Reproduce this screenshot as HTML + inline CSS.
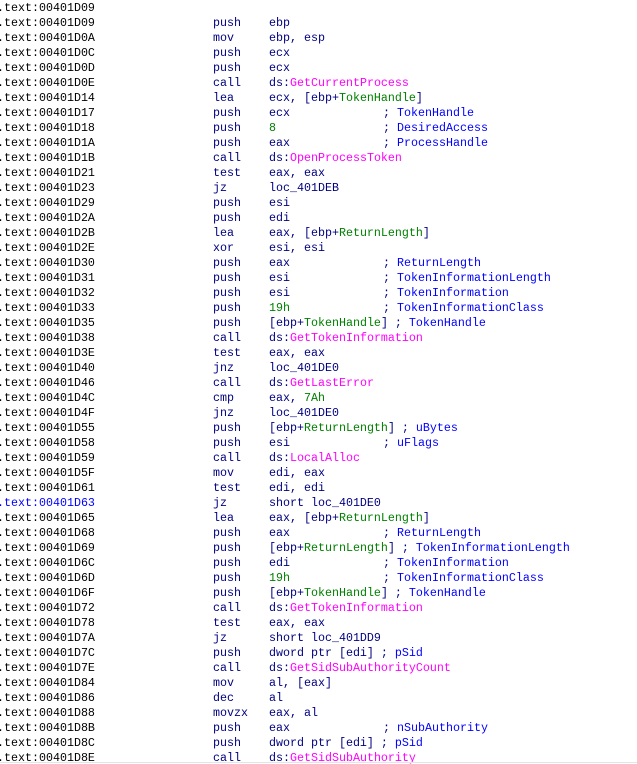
<!DOCTYPE html>
<html><head><meta charset="utf-8"><style>
html,body{margin:0;padding:0;background:#fff;width:637px;height:764px;overflow:hidden}
body{font-family:"Liberation Mono",monospace;font-size:11.67px;position:relative}
.l{position:absolute;left:0;height:15px;line-height:15px;white-space:pre;width:637px}
.a{position:absolute;left:-3px;color:#000}
.m{position:absolute;left:213px;color:#000080}
.o{position:absolute;left:269px;color:#000080}
.k{position:absolute;left:383px;color:#000080}
.f{color:#ff00ff}.g{color:#008000}.c{color:#0000ff}
.b{color:#0000ff}
.hr{position:absolute;left:0;top:762px;width:637px;height:1px;background:#e4e4e4}
</style></head><body>
<div class="l" style="top:1px"><span class="a">.text:00401D09</span></div>
<div class="l" style="top:16px"><span class="a">.text:00401D09</span><span class="m">push</span><span class="o">ebp</span></div>
<div class="l" style="top:31px"><span class="a">.text:00401D0A</span><span class="m">mov</span><span class="o">ebp, esp</span></div>
<div class="l" style="top:46px"><span class="a">.text:00401D0C</span><span class="m">push</span><span class="o">ecx</span></div>
<div class="l" style="top:61px"><span class="a">.text:00401D0D</span><span class="m">push</span><span class="o">ecx</span></div>
<div class="l" style="top:76px"><span class="a">.text:00401D0E</span><span class="m">call</span><span class="o">ds:<span class="f">GetCurrentProcess</span></span></div>
<div class="l" style="top:91px"><span class="a">.text:00401D14</span><span class="m">lea</span><span class="o">ecx, [ebp+<span class="g">TokenHandle</span>]</span></div>
<div class="l" style="top:106px"><span class="a">.text:00401D17</span><span class="m">push</span><span class="o">ecx</span><span class="k">; <span class="c">TokenHandle</span></span></div>
<div class="l" style="top:121px"><span class="a">.text:00401D18</span><span class="m">push</span><span class="o"><span class="g">8</span></span><span class="k">; <span class="c">DesiredAccess</span></span></div>
<div class="l" style="top:136px"><span class="a">.text:00401D1A</span><span class="m">push</span><span class="o">eax</span><span class="k">; <span class="c">ProcessHandle</span></span></div>
<div class="l" style="top:151px"><span class="a">.text:00401D1B</span><span class="m">call</span><span class="o">ds:<span class="f">OpenProcessToken</span></span></div>
<div class="l" style="top:166px"><span class="a">.text:00401D21</span><span class="m">test</span><span class="o">eax, eax</span></div>
<div class="l" style="top:181px"><span class="a">.text:00401D23</span><span class="m">jz</span><span class="o">loc_401DEB</span></div>
<div class="l" style="top:196px"><span class="a">.text:00401D29</span><span class="m">push</span><span class="o">esi</span></div>
<div class="l" style="top:211px"><span class="a">.text:00401D2A</span><span class="m">push</span><span class="o">edi</span></div>
<div class="l" style="top:226px"><span class="a">.text:00401D2B</span><span class="m">lea</span><span class="o">eax, [ebp+<span class="g">ReturnLength</span>]</span></div>
<div class="l" style="top:241px"><span class="a">.text:00401D2E</span><span class="m">xor</span><span class="o">esi, esi</span></div>
<div class="l" style="top:256px"><span class="a">.text:00401D30</span><span class="m">push</span><span class="o">eax</span><span class="k">; <span class="c">ReturnLength</span></span></div>
<div class="l" style="top:271px"><span class="a">.text:00401D31</span><span class="m">push</span><span class="o">esi</span><span class="k">; <span class="c">TokenInformationLength</span></span></div>
<div class="l" style="top:286px"><span class="a">.text:00401D32</span><span class="m">push</span><span class="o">esi</span><span class="k">; <span class="c">TokenInformation</span></span></div>
<div class="l" style="top:301px"><span class="a">.text:00401D33</span><span class="m">push</span><span class="o"><span class="g">19h</span></span><span class="k">; <span class="c">TokenInformationClass</span></span></div>
<div class="l" style="top:316px"><span class="a">.text:00401D35</span><span class="m">push</span><span class="o">[ebp+<span class="g">TokenHandle</span>] ; <span class="c">TokenHandle</span></span></div>
<div class="l" style="top:331px"><span class="a">.text:00401D38</span><span class="m">call</span><span class="o">ds:<span class="f">GetTokenInformation</span></span></div>
<div class="l" style="top:346px"><span class="a">.text:00401D3E</span><span class="m">test</span><span class="o">eax, eax</span></div>
<div class="l" style="top:361px"><span class="a">.text:00401D40</span><span class="m">jnz</span><span class="o">loc_401DE0</span></div>
<div class="l" style="top:376px"><span class="a">.text:00401D46</span><span class="m">call</span><span class="o">ds:<span class="f">GetLastError</span></span></div>
<div class="l" style="top:391px"><span class="a">.text:00401D4C</span><span class="m">cmp</span><span class="o">eax, <span class="g">7Ah</span></span></div>
<div class="l" style="top:406px"><span class="a">.text:00401D4F</span><span class="m">jnz</span><span class="o">loc_401DE0</span></div>
<div class="l" style="top:421px"><span class="a">.text:00401D55</span><span class="m">push</span><span class="o">[ebp+<span class="g">ReturnLength</span>] ; <span class="c">uBytes</span></span></div>
<div class="l" style="top:436px"><span class="a">.text:00401D58</span><span class="m">push</span><span class="o">esi</span><span class="k">; <span class="c">uFlags</span></span></div>
<div class="l" style="top:451px"><span class="a">.text:00401D59</span><span class="m">call</span><span class="o">ds:<span class="f">LocalAlloc</span></span></div>
<div class="l" style="top:466px"><span class="a">.text:00401D5F</span><span class="m">mov</span><span class="o">edi, eax</span></div>
<div class="l" style="top:481px"><span class="a">.text:00401D61</span><span class="m">test</span><span class="o">edi, edi</span></div>
<div class="l" style="top:496px"><span class="a b">.text:00401D63</span><span class="m">jz</span><span class="o">short loc_401DE0</span></div>
<div class="l" style="top:511px"><span class="a">.text:00401D65</span><span class="m">lea</span><span class="o">eax, [ebp+<span class="g">ReturnLength</span>]</span></div>
<div class="l" style="top:526px"><span class="a">.text:00401D68</span><span class="m">push</span><span class="o">eax</span><span class="k">; <span class="c">ReturnLength</span></span></div>
<div class="l" style="top:541px"><span class="a">.text:00401D69</span><span class="m">push</span><span class="o">[ebp+<span class="g">ReturnLength</span>] ; <span class="c">TokenInformationLength</span></span></div>
<div class="l" style="top:556px"><span class="a">.text:00401D6C</span><span class="m">push</span><span class="o">edi</span><span class="k">; <span class="c">TokenInformation</span></span></div>
<div class="l" style="top:571px"><span class="a">.text:00401D6D</span><span class="m">push</span><span class="o"><span class="g">19h</span></span><span class="k">; <span class="c">TokenInformationClass</span></span></div>
<div class="l" style="top:586px"><span class="a">.text:00401D6F</span><span class="m">push</span><span class="o">[ebp+<span class="g">TokenHandle</span>] ; <span class="c">TokenHandle</span></span></div>
<div class="l" style="top:601px"><span class="a">.text:00401D72</span><span class="m">call</span><span class="o">ds:<span class="f">GetTokenInformation</span></span></div>
<div class="l" style="top:616px"><span class="a">.text:00401D78</span><span class="m">test</span><span class="o">eax, eax</span></div>
<div class="l" style="top:631px"><span class="a">.text:00401D7A</span><span class="m">jz</span><span class="o">short loc_401DD9</span></div>
<div class="l" style="top:646px"><span class="a">.text:00401D7C</span><span class="m">push</span><span class="o">dword ptr [edi] ; <span class="c">pSid</span></span></div>
<div class="l" style="top:661px"><span class="a">.text:00401D7E</span><span class="m">call</span><span class="o">ds:<span class="f">GetSidSubAuthorityCount</span></span></div>
<div class="l" style="top:676px"><span class="a">.text:00401D84</span><span class="m">mov</span><span class="o">al, [eax]</span></div>
<div class="l" style="top:691px"><span class="a">.text:00401D86</span><span class="m">dec</span><span class="o">al</span></div>
<div class="l" style="top:706px"><span class="a">.text:00401D88</span><span class="m">movzx</span><span class="o">eax, al</span></div>
<div class="l" style="top:721px"><span class="a">.text:00401D8B</span><span class="m">push</span><span class="o">eax</span><span class="k">; <span class="c">nSubAuthority</span></span></div>
<div class="l" style="top:736px"><span class="a">.text:00401D8C</span><span class="m">push</span><span class="o">dword ptr [edi] ; <span class="c">pSid</span></span></div>
<div class="l" style="top:751px"><span class="a">.text:00401D8E</span><span class="m">call</span><span class="o">ds:<span class="f">GetSidSubAuthority</span></span></div>
<div class="hr"></div>
</body></html>
